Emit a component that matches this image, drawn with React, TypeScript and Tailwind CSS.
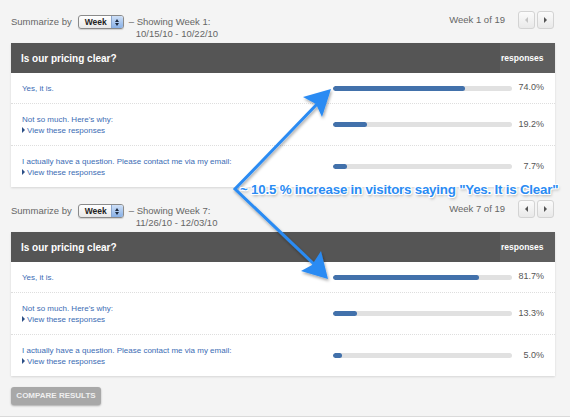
import React from 'react';

interface Answer {
  label: string;
  pct: number;
  link?: boolean;
}

interface Period {
  week: number;
  range: string;
  answers: Answer[];
}

const periods: Period[] = [
  {
    week: 1,
    range: '10/15/10 - 10/22/10',
    answers: [
      { label: 'Yes, it is.', pct: 74.0 },
      { label: "Not so much. Here's why:", pct: 19.2, link: true },
      { label: 'I actually have a question. Please contact me via my email:', pct: 7.7, link: true },
    ],
  },
  {
    week: 7,
    range: '11/26/10 - 12/03/10',
    answers: [
      { label: 'Yes, it is.', pct: 81.7 },
      { label: "Not so much. Here's why:", pct: 13.3, link: true },
      { label: 'I actually have a question. Please contact me via my email:', pct: 5.0, link: true },
    ],
  },
];

function WeekSelect() {
  return (
    <span className="ml-[6px] mt-[-1px] inline-flex h-[14px] w-[46px] items-stretch overflow-hidden rounded-[3px] border border-[#8a8a8a] bg-gradient-to-b from-white to-[#e9e9e9] shadow-[0_1px_1px_rgba(0,0,0,0.15)]">
      <span className="flex-1 pl-[6px] text-[8.5px] font-bold leading-[12px] text-[#222]">Week</span>
      <span className="flex w-[12px] flex-col items-center justify-center border-l border-[#8aa6cf] bg-gradient-to-b from-[#cfe0f7] to-[#88b0e6]">
        <span className="block h-0 w-0 border-x-[2px] border-b-[3px] border-x-transparent border-b-[#1c2a40]" />
        <span className="mt-[1px] block h-0 w-0 border-x-[2px] border-t-[3px] border-x-transparent border-t-[#1c2a40]" />
      </span>
    </span>
  );
}

function NavButton({ dir, disabled }: { dir: 'left' | 'right'; disabled?: boolean }) {
  return (
    <span className="flex h-[18px] w-[17px] items-center justify-center rounded-[3px] border border-[#d3d3d3] bg-gradient-to-b from-[#fbfbfb] to-[#e9e9e9]">
      {dir === 'left' ? (
        <span
          className={`block h-0 w-0 border-y-[3px] border-r-[3px] border-y-transparent ${disabled ? 'border-r-[#c4c4c4]' : 'border-r-[#555]'}`}
        />
      ) : (
        <span className="block h-0 w-0 border-y-[3px] border-l-[3px] border-y-transparent border-l-[#555]" />
      )}
    </span>
  );
}

function Toolbar({ period }: { period: Period }) {
  return (
    <div className="flex h-[32px] items-start justify-between">
      <div className="flex items-start pt-[5px] text-[9.5px] leading-[12px] text-[#666]">
        <span>Summarize by</span>
        <WeekSelect />
        <div className="ml-[5px]">
          <div>– Showing Week {period.week}:</div>
          <div className="pl-[7px]">{period.range}</div>
        </div>
      </div>
      <div className="mr-[1px] flex h-[18px] items-center text-[9.5px] text-[#666]">
        <span>Week {period.week} of 19</span>
        <div className="ml-[13px] flex gap-[2px]">
          <NavButton dir="left" disabled={period.week === 1} />
          <NavButton dir="right" />
        </div>
      </div>
    </div>
  );
}

function Row({ answer, first }: { answer: Answer; first: boolean }) {
  return (
    <div
      className={`flex items-center px-[11px] ${first ? 'h-[30px]' : 'h-[42px] border-t border-dotted border-[#dedede]'}`}
    >
      <div className="flex-1 text-[8px] leading-[11px] text-[#3b6cb4]">
        <div>{answer.label}</div>
        {answer.link && (
          <div className="flex items-center">
            <span className="mr-[2px] block h-0 w-0 border-y-[3px] border-l-[3px] border-y-transparent border-l-[#2c4f86]" />
            View these responses
          </div>
        )}
      </div>
      <div className="h-[5px] w-[179px] overflow-hidden rounded-full bg-[#e1e1e1]">
        <div className="h-full rounded-full bg-[#4271ab]" style={{ width: `${answer.pct}%` }} />
      </div>
      <div className="w-[32px] text-right text-[9px] text-[#555]">{answer.pct.toFixed(1)}%</div>
    </div>
  );
}

function Section({ period }: { period: Period }) {
  return (
    <div>
      <Toolbar period={period} />
      <div className="bg-white shadow-[0_1px_2px_rgba(0,0,0,0.12)]">
        <div className="flex h-[30px] items-center bg-[#555555] text-white">
          <div className="flex-1 pl-[10px] text-[10px] font-bold">Is our pricing clear?</div>
          <div className="flex h-full w-[55px] items-center bg-[#5e5e5e] pl-[1px] text-[8.5px] font-bold">responses</div>
        </div>
        {period.answers.map((a, i) => (
          <Row key={i} answer={a} first={i === 0} />
        ))}
      </div>
    </div>
  );
}

function Annotation() {
  return (
    <>
      <svg className="pointer-events-none absolute left-0 top-0" width={570} height={417} viewBox="0 0 570 417">
        <defs>
          <filter id="sh" x="-20%" y="-20%" width="140%" height="140%">
            <feDropShadow dx="1" dy="2" stdDeviation="1.5" floodColor="#000" floodOpacity="0.35" />
          </filter>
        </defs>
        <g filter="url(#sh)" fill="#2a8bf3" stroke="#2a8bf3">
          <polyline points="320,101 235,189 316,266" fill="none" strokeWidth={3} strokeLinejoin="miter" />
          <polygon points="331,89 303,97 316,104 322,117" stroke="none" />
          <polygon points="328,279 321,251 312,265 301,271" stroke="none" />
        </g>
      </svg>
      <div className="pointer-events-none absolute left-[240px] top-[181px] whitespace-nowrap text-[13.3px] font-bold leading-[17px] tracking-[-0.2px] text-[#2a8bf3] [text-shadow:1px_0_0_#fff,-1px_0_0_#fff,0_1px_0_#fff,0_-1px_0_#fff,1px_1px_0_#fff,-1px_-1px_0_#fff,1px_-1px_0_#fff,-1px_1px_0_#fff,1px_2px_3px_rgba(0,0,0,0.35)]">
        ~ 10.5 % increase in visitors saying "Yes. It is Clear"
      </div>
    </>
  );
}

export default function App() {
  return (
    <div className="relative box-border h-[417px] w-[570px] overflow-hidden border-b border-[#dadada] bg-[#f4f4f4] pl-[11px] pr-[15px] pt-[11px] font-['Liberation_Sans',Arial,sans-serif]">
      <div className="flex flex-col gap-[13px]">
        {periods.map((p) => (
          <Section key={p.week} period={p} />
        ))}
      </div>
      <button className="mt-[11px] h-[18px] w-[90px] rounded-[3px] bg-[#a8a8a8] text-[8px] font-bold text-[#efefef] shadow-[0_1px_2px_rgba(0,0,0,0.3)]">
        COMPARE RESULTS
      </button>
      <Annotation />
    </div>
  );
}
